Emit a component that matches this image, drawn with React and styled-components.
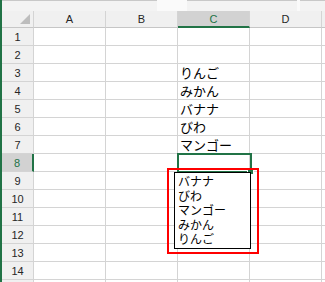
import { createGlobalStyle, styled } from "styled-components"

const GREEN = "#217346"
const GRID = "#d4d4d4"

const GlobalStyle = createGlobalStyle`
  html, body { margin: 0; padding: 0; background: #fff; }
  body { font-family: "Liberation Sans", Arial, sans-serif; overflow: hidden; }
`

const cols = ["A", "B", "C", "D", ""]
const activeCol = "C"
const activeRow = 8
const values = { 3: "りんご", 4: "みかん", 5: "バナナ", 6: "びわ", 7: "マンゴー" }
const listItems = ["バナナ", "びわ", "マンゴー", "みかん", "りんご"]

const Page = styled.div`
  width: 325px;
  height: 282px;
  overflow: hidden;
  box-sizing: border-box;
  border-left: 2px solid ${GREEN};
  background: #fff;
`

const TopStrip = styled.div`
  height: 11px;
  display: flex;
  background: #f3f3f3;
`

const StripPart = styled.div`
  width: ${(p) => p.w}px;
  flex: ${(p) => (p.w ? "none" : "1")};
  border-top: 1px solid ${(p) => (p.gap ? "transparent" : "#c8c8c8")};
  background: ${(p) => (p.gap ? "#fafafa" : "transparent")};
`

const Sheet = styled.div`
  position: relative;
  display: grid;
  grid-template-columns: 32px repeat(4, 72px) 1fr;
  grid-template-rows: 17px repeat(15, 18px);
`

const Corner = styled.div`
  position: relative;
  background: #f0f0f0;
  border-right: 1px solid ${GRID};
  border-bottom: 1px solid #c6c6c6;
  &::after {
    content: "";
    position: absolute;
    right: 3px;
    bottom: 3px;
    width: 0;
    height: 0;
    border-left: 10px solid transparent;
    border-bottom: 10px solid #bdbdbd;
  }
`

const ColHead = styled.div`
  box-sizing: border-box;
  display: flex;
  align-items: center;
  justify-content: center;
  font-size: 11px;
  color: ${(p) => (p.active ? GREEN : "#262626")};
  background: ${(p) => (p.active ? "#d2d2d2" : "#f0f0f0")};
  border-right: 1px solid ${GRID};
  border-bottom: ${(p) => (p.active ? `2px solid ${GREEN}` : "1px solid #c6c6c6")};
`

const RowHead = styled.div`
  box-sizing: border-box;
  display: flex;
  align-items: center;
  justify-content: center;
  padding-top: 1px;
  font-size: 11px;
  color: ${(p) => (p.active ? GREEN : "#262626")};
  background: ${(p) => (p.active ? "#d2d2d2" : "#f0f0f0")};
  border-bottom: 1px solid ${GRID};
  border-right: ${(p) => (p.active ? `2px solid ${GREEN}` : `1px solid ${GRID}`)};
`

const Cell = styled.div`
  box-sizing: border-box;
  display: flex;
  align-items: flex-end;
  padding: 0 2px 1px;
  font-family: "Noto Sans CJK JP", sans-serif;
  font-size: 13px;
  line-height: 15px;
  color: #000;
  white-space: nowrap;
  border-right: 1px solid ${GRID};
  border-bottom: 1px solid ${GRID};
`

const Selection = styled.div`
  position: absolute;
  left: 175px;
  top: 142px;
  width: 75px;
  height: 20px;
  box-sizing: border-box;
  border: 2px solid ${GREEN};
`

const FillHandle = styled.div`
  position: absolute;
  left: 246px;
  top: 158px;
  width: 5px;
  height: 5px;
  background: ${GREEN};
  outline: 1px solid #fff;
`

const ListBox = styled.ul`
  position: absolute;
  left: 172px;
  top: 161px;
  width: 77px;
  height: 77px;
  box-sizing: border-box;
  margin: 0;
  padding: 1px 3px;
  list-style: none;
  background: #fff;
  border: 1px solid #000;
  font-family: "Noto Sans CJK JP", sans-serif;
  font-size: 12px;
  color: #000;
`

const ListItem = styled.li`
  height: 14.5px;
  line-height: 14.5px;
  white-space: nowrap;
`

const Callout = styled.div`
  position: absolute;
  left: 165px;
  top: 157px;
  width: 92px;
  height: 86px;
  box-sizing: border-box;
  border: 2px solid #ff0000;
`

export default function App() {
  const rows = Array.from({ length: 15 }, (_, i) => i + 1)
  return (
    <Page>
      <GlobalStyle />
      <TopStrip>
        <StripPart w={155} />
        <StripPart w={30} gap />
        <StripPart w={110} />
        <StripPart w={3} gap />
        <StripPart />
      </TopStrip>
      <Sheet>
        <Corner />
        {cols.map((c, i) => (
          <ColHead key={i} active={c === activeCol}>{c}</ColHead>
        ))}
        {rows.map((r) => [
          <RowHead key={`h${r}`} active={r === activeRow}>{r < 15 ? r : null}</RowHead>,
          ...cols.map((c, i) => (
            <Cell key={`${r}-${i}`}>{c === "C" ? values[r] : null}</Cell>
          )),
        ])}
        <Selection />
        <FillHandle />
        <Callout />
        <ListBox>
          {listItems.map((t) => (
            <ListItem key={t}>{t}</ListItem>
          ))}
        </ListBox>
      </Sheet>
    </Page>
  )
}
